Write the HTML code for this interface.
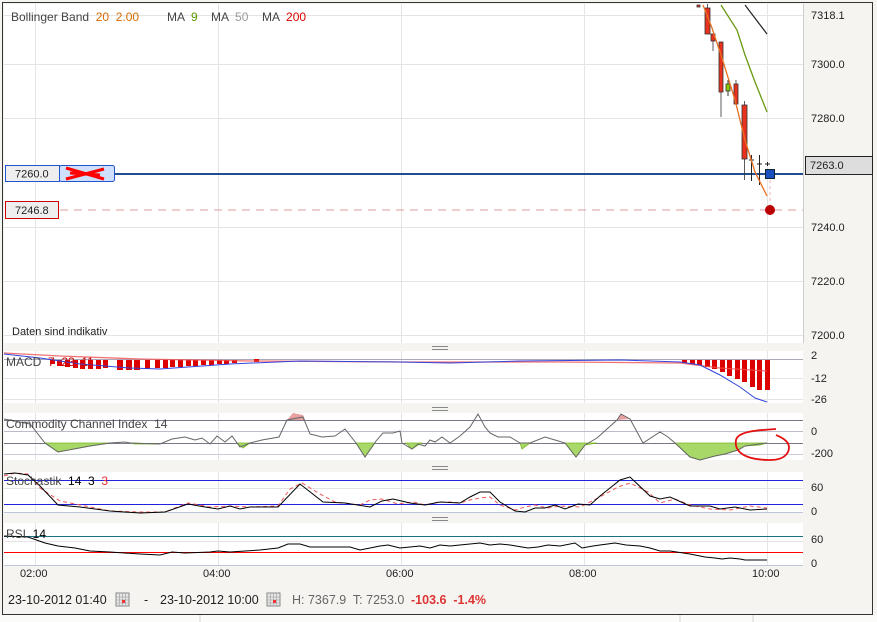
<!DOCTYPE html>
<html><head><meta charset="utf-8"><style>
html,body{margin:0;padding:0;background:#f5f4f1;}
svg{display:block;font-family:"Liberation Sans",sans-serif;}
svg text{white-space:pre;}
</style></head><body>
<svg width="877" height="622" viewBox="0 0 877 622" xmlns="http://www.w3.org/2000/svg" xml:space="preserve">
<rect width="877" height="622" fill="#f5f4f1"/>
<rect x="2.5" y="2.5" width="870" height="612" fill="none" stroke="#333" stroke-width="1"/>
<line x1="200" y1="615" x2="200" y2="622" stroke="#999"/>
<line x1="680" y1="615" x2="680" y2="622" stroke="#999"/>
<line x1="753" y1="615" x2="753" y2="622" stroke="#999"/>
<rect x="0" y="615" width="877" height="7" fill="#fff" opacity="0.6"/>

<rect x="4" y="4" width="799" height="339" fill="#fff"/>
<g stroke="#e4e4e4" stroke-width="1">
<line x1="35.5" y1="4" x2="35.5" y2="343"/><line x1="218.5" y1="4" x2="218.5" y2="343"/>
<line x1="401.5" y1="4" x2="401.5" y2="343"/><line x1="584.5" y1="4" x2="584.5" y2="343"/>
<line x1="767.5" y1="4" x2="767.5" y2="343"/>
<line x1="4" y1="15.5" x2="803" y2="15.5"/><line x1="4" y1="64.5" x2="803" y2="64.5"/>
<line x1="4" y1="118.5" x2="803" y2="118.5"/><line x1="4" y1="227.5" x2="803" y2="227.5"/>
<line x1="4" y1="281.5" x2="803" y2="281.5"/><line x1="4" y1="335.5" x2="803" y2="335.5"/>
</g>
<line x1="803.5" y1="4" x2="803.5" y2="343" stroke="#ccc"/>
<text x="11" y="21" font-size="12" fill="#444">Bollinger Band  <tspan fill="#d86a00">20  2.00</tspan></text>
<text x="167" y="21" font-size="12" fill="#444">MA  <tspan fill="#5a9a00">9</tspan></text>
<text x="211" y="21" font-size="12" fill="#444">MA  <tspan fill="#999">50</tspan></text>
<text x="262" y="21" font-size="12" fill="#444">MA  <tspan fill="#d00">200</tspan></text>
<text x="12" y="335" font-size="11" fill="#222">Daten sind indikativ</text>

<line x1="115" y1="174" x2="803" y2="174" stroke="#1f4f8f" stroke-width="2"/>
<line x1="60" y1="210" x2="803" y2="210" stroke="#e0b0b0" stroke-width="1.2" stroke-dasharray="8,6"/>
<rect x="5.5" y="165.5" width="54" height="16" fill="#eee" stroke="#2255cc"/>
<rect x="59.5" y="165.5" width="55" height="16" rx="2" fill="#cfe0ff" stroke="#2255cc"/>
<text x="15" y="177.5" font-size="11" fill="#222">7260.0</text>
<path d="M66 168 L104 179 M66 179 L104 169 M70 173 L100 175" stroke="#f00" stroke-width="3"/>
<rect x="5.5" y="201.5" width="53" height="17" fill="#eee" stroke="#c00"/>
<text x="15" y="214" font-size="11" fill="#222">7246.8</text>

<g fill="#e8321e" stroke="#333" stroke-width="0.8">
<rect x="697" y="5" width="3" height="2"/>
<line x1="707.5" y1="4" x2="707.5" y2="34"/><rect x="705" y="8" width="5" height="26"/>
<line x1="713" y1="34" x2="713" y2="51"/><rect x="711" y="34" width="4" height="7"/>
<line x1="721" y1="42" x2="721" y2="117"/><rect x="719" y="42" width="4" height="50"/>
<line x1="736" y1="80" x2="736" y2="105"/><rect x="734" y="84" width="4" height="20"/>
<line x1="744.5" y1="101" x2="744.5" y2="180"/><rect x="742" y="105" width="5" height="54"/>
</g>
<line x1="728" y1="80" x2="728" y2="96" stroke="#333"/><rect x="726" y="84" width="4" height="7" fill="#8c0" stroke="#333" stroke-width="0.8"/>
<g stroke="#222" stroke-width="1">
<line x1="751.5" y1="155" x2="751.5" y2="181"/><line x1="749" y1="160" x2="754" y2="160"/>
<line x1="759.5" y1="155" x2="759.5" y2="185"/><line x1="757" y1="164" x2="762" y2="164"/>
<line x1="767.5" y1="162" x2="767.5" y2="166"/><line x1="765" y1="164" x2="770" y2="164"/>
</g>
<polyline points="703,5 712,28 722,58 735,100 745,140 755,172 767,196" fill="none" stroke="#e87020" stroke-width="1.3"/>
<polyline points="721,5 737,30 745,55 755,82 767,112" fill="none" stroke="#6a9a10" stroke-width="1.3"/>
<polyline points="745,5 767,34" fill="none" stroke="#222" stroke-width="1.2"/>
<line x1="770" y1="180" x2="770" y2="206" stroke="#f0b0b0" stroke-dasharray="3,3"/>
<rect x="765.5" y="169.5" width="9" height="9" fill="#1a4fc0" stroke="#123"/>
<circle cx="770" cy="210" r="5" fill="#b00"/>

<g font-size="11" fill="#222">
<text x="811" y="19">7318.1</text><text x="811" y="68">7300.0</text>
<text x="811" y="122">7280.0</text><text x="811" y="231">7240.0</text>
<text x="811" y="285">7220.0</text><text x="811" y="339">7200.0</text>
</g>
<rect x="805.5" y="156.5" width="67" height="18" fill="#ddd" stroke="#222"/>
<text x="810" y="169" font-size="11" fill="#222">7263.0</text>

<g stroke="#888" stroke-width="1">
<line x1="432" y1="346.5" x2="448" y2="346.5"/><line x1="432" y1="349.5" x2="448" y2="349.5"/>
<line x1="432" y1="407.5" x2="448" y2="407.5"/><line x1="432" y1="410.5" x2="448" y2="410.5"/>
<line x1="432" y1="466.5" x2="448" y2="466.5"/><line x1="432" y1="469.5" x2="448" y2="469.5"/>
<line x1="432" y1="517.5" x2="448" y2="517.5"/><line x1="432" y1="520.5" x2="448" y2="520.5"/>
</g>

<rect x="4" y="351" width="799" height="52" fill="#fff"/>
<g stroke="#e4e4e4"><line x1="35.5" y1="351" x2="35.5" y2="403"/><line x1="218.5" y1="351" x2="218.5" y2="403"/><line x1="401.5" y1="351" x2="401.5" y2="403"/><line x1="584.5" y1="351" x2="584.5" y2="403"/><line x1="767.5" y1="351" x2="767.5" y2="403"/>
<line x1="4" y1="378.5" x2="803" y2="378.5"/><line x1="4" y1="399.5" x2="803" y2="399.5"/></g>
<line x1="4" y1="359.5" x2="803" y2="359.5" stroke="#aab"/>
<g fill="#d00">
<rect x="50" y="360" width="5" height="4"/><rect x="57" y="360" width="5" height="6"/><rect x="65" y="360" width="5" height="7"/><rect x="73" y="360" width="5" height="8"/><rect x="80" y="360" width="5" height="9"/><rect x="88" y="360" width="5" height="9"/><rect x="96" y="360" width="5" height="9"/><rect x="103" y="360" width="5" height="8"/><rect x="117" y="360" width="6" height="10"/><rect x="126" y="360" width="6" height="10"/><rect x="134" y="360" width="6" height="10"/><rect x="145" y="360" width="5" height="9"/><rect x="155" y="360" width="5" height="8"/><rect x="163" y="360" width="5" height="8"/><rect x="170" y="360" width="5" height="7"/><rect x="178" y="360" width="5" height="7"/><rect x="186" y="360" width="5" height="6"/><rect x="193" y="360" width="5" height="6"/><rect x="201" y="360" width="5" height="5"/><rect x="209" y="360" width="5" height="5"/><rect x="217" y="360" width="5" height="4"/><rect x="224" y="360" width="5" height="4"/><rect x="232" y="360" width="5" height="3"/><rect x="254" y="359" width="5" height="3"/>
<rect x="682" y="360" width="5" height="3"/><rect x="690" y="360" width="5" height="4"/><rect x="697" y="360" width="5" height="5"/><rect x="705" y="360" width="5" height="7"/><rect x="712" y="360" width="5" height="9"/><rect x="720" y="360" width="5" height="12"/><rect x="727" y="360" width="5" height="16"/><rect x="735" y="360" width="5" height="19"/><rect x="742" y="360" width="5" height="22"/><rect x="750" y="360" width="5" height="27"/><rect x="757" y="360" width="5" height="30"/><rect x="765" y="360" width="5" height="30"/>
</g>
<polyline points="4,353 60,356 140,359 250,361 400,362 560,362 680,363 720,368 767,371" fill="none" stroke="#f05050" stroke-width="1.3" opacity="0.8"/>
<polyline points="4,354 40,358 80,364 130,368 160,369 230,364 300,361 400,362 450,363 520,361 620,360 680,362 700,365 720,375 740,387 755,398 767,402" fill="none" stroke="#3344dd" stroke-width="1"/>
<text x="6" y="366" font-size="12" fill="#444">MACD  <tspan fill="#c00">7  23  11</tspan></text>
<g font-size="11" fill="#222"><text x="811" y="359">2</text><text x="811" y="382">-12</text><text x="811" y="403">-26</text></g>

<rect x="4" y="413" width="799" height="47" fill="#fff"/>
<g stroke="#e4e4e4"><line x1="35.5" y1="413" x2="35.5" y2="460"/><line x1="218.5" y1="413" x2="218.5" y2="460"/><line x1="401.5" y1="413" x2="401.5" y2="460"/><line x1="584.5" y1="413" x2="584.5" y2="460"/><line x1="767.5" y1="413" x2="767.5" y2="460"/></g>
<line x1="4" y1="420.5" x2="803" y2="420.5" stroke="#778"/>
<line x1="4" y1="431.5" x2="803" y2="431.5" stroke="#bbc"/>
<line x1="4" y1="443.5" x2="803" y2="443.5" stroke="#778"/>
<line x1="4" y1="454.5" x2="803" y2="454.5" stroke="#ccd"/>
<path d="M45,443 L58,452 L90,446 L110,443 Z M130,443 L160,444 L135,444 Z M237,443 L243,448 L250,443 Z M356,443 L365,457 L375,443 Z M520,443 L522,449 L530,443 Z M565,443 L576,457 L585,445 L597,443 Z M675,443 L690,457 L700,460 L715,456 L725,454 L738,450 L745,446 L760,445 L767,443 Z M406,443 L412,449 L418,445 L422,443 Z" fill="#a8d868" stroke="#7ab820" stroke-width="0.8"/>
<path d="M287,420 L293,413 L303,415 L305,420 Z M617,420 L621,414 L630,419 Z" fill="#e8a0a0"/>
<polyline points="4,419 30,424 45,443 58,452 90,446 110,443 125,442 130,443 160,444 172,439 185,437 195,440 202,438 210,444 217,436 225,442 232,436 240,447 250,443 262,440 279,437 287,420 303,417 310,434 322,437 335,436 345,429 356,443 365,457 376,441 383,433 393,433 400,431 402,443 412,449 418,444 425,446 430,440 435,442 442,437 450,443 460,436 470,427 478,414 485,427 490,433 498,437 510,437 520,443 530,443 545,437 555,440 565,443 576,457 585,445 597,438 617,420 621,414 630,419 643,443 660,432 668,437 675,443 690,457 700,460 715,456 725,454 738,450 745,446 767,443" fill="none" stroke="#666" stroke-width="1"/>
<text x="6" y="428" font-size="12" fill="#444">Commodity Channel Index  14</text>
<path d="M776,429 C760,430 738,431 736,440 C734,452 745,460 770,460 C790,460 792,446 786,441 C782,437 778,436 776,435" fill="none" stroke="#e31010" stroke-width="1.8"/>
<g font-size="11" fill="#222"><text x="811" y="435">0</text><text x="811" y="457">-200</text></g>

<rect x="4" y="472" width="799" height="41" fill="#fff"/>
<g stroke="#e4e4e4"><line x1="35.5" y1="472" x2="35.5" y2="513"/><line x1="218.5" y1="472" x2="218.5" y2="513"/><line x1="401.5" y1="472" x2="401.5" y2="513"/><line x1="584.5" y1="472" x2="584.5" y2="513"/><line x1="767.5" y1="472" x2="767.5" y2="513"/><line x1="4" y1="488.5" x2="803" y2="488.5"/></g>
<line x1="4" y1="480.5" x2="803" y2="480.5" stroke="#2222dd"/>
<line x1="4" y1="504.5" x2="803" y2="504.5" stroke="#2222dd"/>
<line x1="4" y1="512.5" x2="803" y2="512.5" stroke="#bcc8d8"/>
<polyline points="4,476 15,473 28,474 40,488 60,501 80,505 110,511 140,512 165,512 175,508 188,503 200,505 210,507 230,506 250,507 278,506 290,489 302,483 320,494 335,502 360,505 370,500 382,499 398,504 414,502 425,505 438,502 450,502 460,503 470,500 480,498 490,497 500,505 515,510 525,507 535,505 548,508 560,506 580,507 598,498 618,487 630,483 648,492 660,503 675,499 690,505 710,509 730,510 750,506 767,508" fill="none" stroke="#f05555" stroke-width="1" stroke-dasharray="4,3"/>
<polyline points="4,474 15,473 28,475 40,486 58,505 80,507 110,511 140,513 165,512 188,504 205,507 218,509 230,506 240,509 250,507 278,507 300,484 323,502 345,503 370,507 382,501 393,499 410,503 425,505 440,502 460,503 470,497 480,492 490,492 500,502 515,511 525,512 535,508 545,508 555,505 565,509 578,504 590,505 600,496 610,488 620,480 630,477 650,496 660,499 670,497 690,506 710,506 720,509 735,507 750,510 767,509" fill="none" stroke="#000" stroke-width="1"/>
<text x="6" y="485" font-size="12" fill="#444">Stochastik  <tspan fill="#000">14  3</tspan>  <tspan fill="#e33">3</tspan></text>
<g font-size="11" fill="#222"><text x="811" y="491">60</text><text x="811" y="515">0</text></g>

<rect x="4" y="523" width="799" height="43" fill="#fff"/>
<g stroke="#e4e4e4"><line x1="35.5" y1="523" x2="35.5" y2="566"/><line x1="218.5" y1="523" x2="218.5" y2="566"/><line x1="401.5" y1="523" x2="401.5" y2="566"/><line x1="584.5" y1="523" x2="584.5" y2="566"/><line x1="767.5" y1="523" x2="767.5" y2="566"/><line x1="4" y1="541.5" x2="803" y2="541.5"/></g>
<line x1="4" y1="536.5" x2="803" y2="536.5" stroke="#1a7080"/>
<line x1="4" y1="552.5" x2="803" y2="552.5" stroke="#f00"/>
<line x1="4" y1="565.5" x2="803" y2="565.5" stroke="#bcc8d8"/>
<polyline points="4,536 28,537 45,543 58,546 75,548 90,551 110,552 140,554 160,555 172,552 185,553 210,552 218,551 230,552 260,550 278,548 288,544 300,544 310,547 340,547 350,547 360,550 370,548 380,546 388,545 400,548 410,547 420,546 430,548 440,545 450,546 460,545 470,544 480,543 490,545 500,544 510,545 528,548 538,547 548,545 560,546 575,543 582,548 593,546 600,545 615,543 626,545 640,546 650,548 660,551 670,551 690,554 705,557 715,558 722,559 730,558 740,559 745,560 767,560" fill="none" stroke="#000" stroke-width="1"/>
<text x="6" y="538" font-size="12" fill="#444">RSI  <tspan fill="#000">14</tspan></text>
<g font-size="11" fill="#222"><text x="811" y="543">60</text><text x="811" y="567">0</text></g>

<g font-size="11" fill="#222"><text x="20" y="577">02:00</text><text x="203" y="577">04:00</text><text x="386" y="577">06:00</text><text x="569" y="577">08:00</text><text x="752" y="577">10:00</text></g>

<text x="8" y="604" font-size="12.5" fill="#222">23-10-2012 01:40</text>
<g>
<rect x="116" y="593" width="13" height="13" fill="#e8e8e8" stroke="#888"/>
<path d="M116 597h13M116 600h13M116 603h13M119.5 593v13M122.5 593v13M125.5 593v13" stroke="#aaa" stroke-width="0.8"/>
<rect x="122" y="600" width="3" height="3" fill="#e33"/>
</g>
<text x="144" y="604" font-size="12.5" fill="#222">-</text>
<text x="160" y="604" font-size="12.5" fill="#222">23-10-2012 10:00</text>
<g>
<rect x="267" y="593" width="13" height="13" fill="#e8e8e8" stroke="#888"/>
<path d="M267 597h13M267 600h13M267 603h13M270.5 593v13M273.5 593v13M276.5 593v13" stroke="#aaa" stroke-width="0.8"/>
<rect x="273" y="600" width="3" height="3" fill="#e33"/>
</g>
<text x="292" y="604" font-size="12.5" fill="#666">H: 7367.9  T: 7253.0</text>
<text x="411" y="604" font-size="12.5" fill="#d33" font-weight="bold">-103.6  -1.4%</text>
</svg>
</body></html>
